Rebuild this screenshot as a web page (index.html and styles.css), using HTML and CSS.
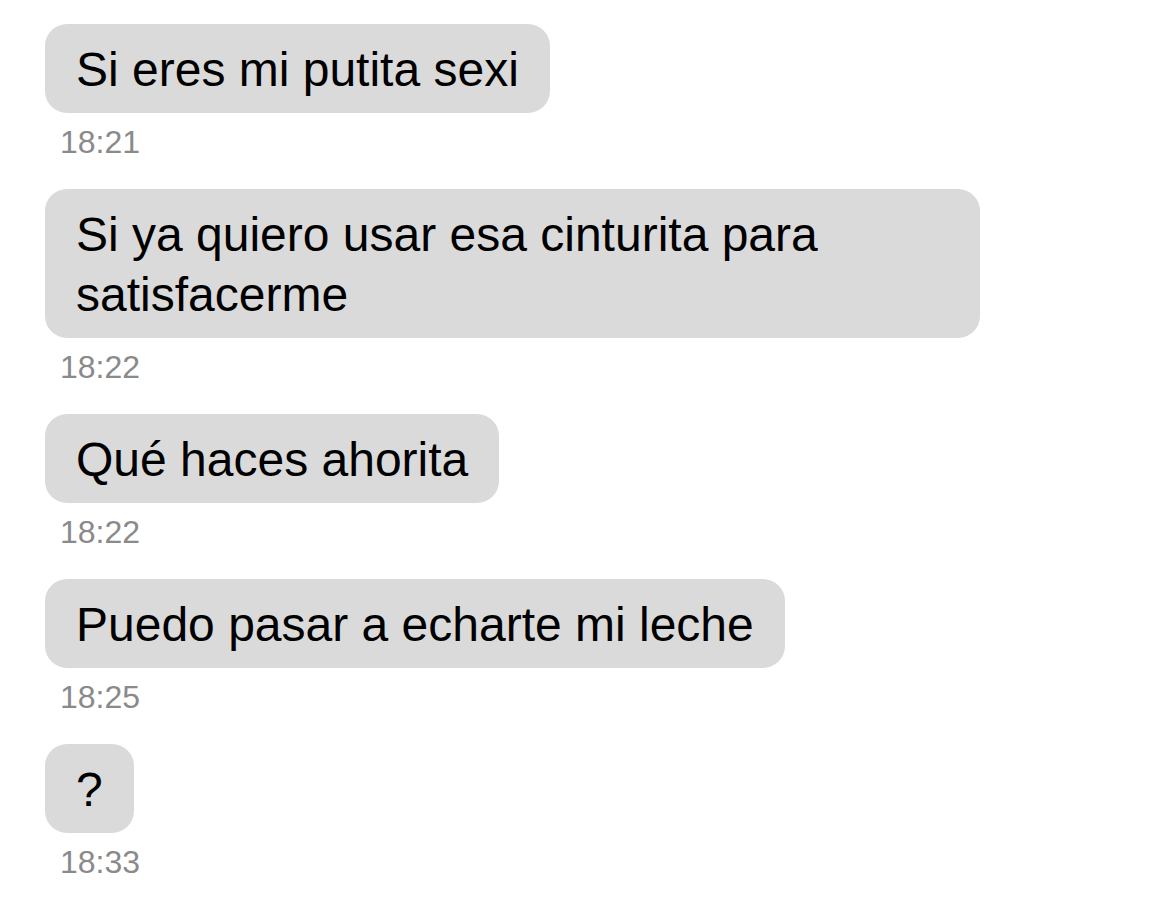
FILE: index.html
```html
<!DOCTYPE html>
<html lang="es">
<head>
<meta charset="utf-8">
<title>Chat</title>
<link rel="stylesheet" href="styles.css">
</head>
<body>
<div class="thread">
  <div class="msg">
    <div class="bubble">Si eres mi putita sexi</div>
    <div class="time">18:21</div>
  </div>
  <div class="msg">
    <div class="bubble">Si ya quiero usar esa cinturita para satisfacerme</div>
    <div class="time">18:22</div>
  </div>
  <div class="msg">
    <div class="bubble">Qué haces ahorita</div>
    <div class="time">18:22</div>
  </div>
  <div class="msg">
    <div class="bubble">Puedo pasar a echarte mi leche</div>
    <div class="time">18:25</div>
  </div>
  <div class="msg">
    <div class="bubble">?</div>
    <div class="time">18:33</div>
  </div>
</div>
</body>
</html>
```
FILE: styles.css
```css
html, body {
  margin: 0;
  padding: 0;
  background: #ffffff;
}
body {
  font-family: "Liberation Sans", Arial, sans-serif;
  color: #000;
}
.thread {
  display: flex;
  flex-direction: column;
  align-items: flex-start;
  padding: 24px 0 0 45px;
}
.msg {
  display: flex;
  flex-direction: column;
  align-items: flex-start;
  margin-bottom: 29px;
}
.bubble {
  background: #dadada;
  border-radius: 22px;
  font-size: 48px;
  line-height: 60px;
  padding: 16px 31px 13px 31px;
  max-width: 873px;
}
.time {
  font-size: 32px;
  line-height: 36px;
  color: #8a8a8a;
  margin-top: 11px;
  padding-left: 15px;
}
```
